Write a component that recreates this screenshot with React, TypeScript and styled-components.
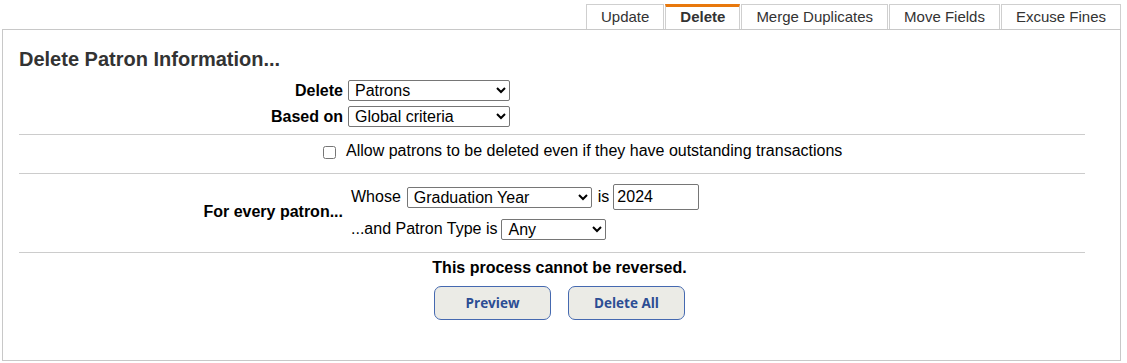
import styled, { createGlobalStyle } from 'styled-components';

const GlobalStyle = createGlobalStyle`
  body {
    margin: 0;
    background: #fff;
    font-family: "Liberation Sans", Arial, sans-serif;
    color: #000;
  }
`;

const TABS = ['Update', 'Delete', 'Merge Duplicates', 'Move Fields', 'Excuse Fines'];

const App = () => {
  return (
    <Page>
      <GlobalStyle />
      <TabBar>
        {TABS.map((t) => (
          <Tab key={t} $active={t === 'Delete'}>
            {t}
          </Tab>
        ))}
      </TabBar>

      <Panel>
        <Heading>Delete Patron Information...</Heading>

        <FieldGrid>
          <Label>Delete</Label>
          <Select $width={162} defaultValue="Patrons">
            <option>Patrons</option>
          </Select>
          <Label>Based on</Label>
          <Select $width={162} defaultValue="Global criteria">
            <option>Global criteria</option>
          </Select>
        </FieldGrid>

        <Divider />

        <CheckRow>
          <Check type="checkbox" />
          <span>Allow patrons to be deleted even if they have outstanding transactions</span>
        </CheckRow>

        <Divider />

        <Criteria>
          <Label>For every patron...</Label>
          <CriteriaRows>
            <Line $height={26}>
              Whose
              <Select $width={185} defaultValue="Graduation Year">
                <option>Graduation Year</option>
              </Select>
              is
              <TextInput defaultValue="2024" />
            </Line>
            <Line $height={22}>
              ...and Patron Type is
              <Select $width={105} defaultValue="Any">
                <option>Any</option>
              </Select>
            </Line>
          </CriteriaRows>
        </Criteria>

        <Divider />

        <Footer>
          <Warning>This process cannot be reversed.</Warning>
          <Buttons>
            <ActionButton>Preview</ActionButton>
            <ActionButton>Delete All</ActionButton>
          </Buttons>
        </Footer>
      </Panel>
    </Page>
  );
};

export default App;

const Page = styled.div`
  width: 1119px;
  padding: 4px 0 0 2px;
`;

const TabBar = styled.div`
  display: flex;
  justify-content: flex-end;
  gap: 1px;
`;

const Tab = styled.div<{ $active?: boolean }>`
  height: 25px;
  box-sizing: border-box;
  display: flex;
  align-items: center;
  padding: ${(p) => (p.$active ? '0 14px 3px' : '0 14px 2px')};
  border: 1px solid #cfcfcf;
  border-bottom: none;
  border-top: ${(p) => (p.$active ? '3px solid #e8780c' : '1px solid #cfcfcf')};
  background: #fff;
  font-size: 15px;
  font-weight: ${(p) => (p.$active ? 700 : 400)};
  color: #333;
  white-space: nowrap;
`;

const Panel = styled.section`
  border: 1px solid #c8c8c8;
  height: 332px;
  box-sizing: border-box;
  padding: 18px 35px 0 16px;
`;

const Heading = styled.h2`
  margin: 0 0 9px;
  font-size: 20px;
  font-weight: 700;
  color: #333;
`;

const FieldGrid = styled.div`
  display: grid;
  grid-template-columns: 324px auto;
  justify-content: start;
  align-items: center;
  column-gap: 5px;
  row-gap: 5px;
  padding-bottom: 7px;
`;

const Label = styled.span`
  font-size: 16px;
  font-weight: 700;
  text-align: right;
`;

const Select = styled.select<{ $width: number }>`
  width: ${(p) => p.$width}px;
  height: 21px;
  font-family: "Liberation Sans", Arial, sans-serif;
  font-size: 16px;
  color: #000;
  background: #fff;
  border: 1px solid #767676;
  border-radius: 2px;
  padding: 0 2px;
`;

const TextInput = styled.input`
  width: 86px;
  height: 26px;
  box-sizing: border-box;
  margin-left: -2px;
  font-family: "Liberation Sans", Arial, sans-serif;
  font-size: 16px;
  border: 1px solid #767676;
  border-radius: 2px;
  padding: 1px 3px;
`;

const Divider = styled.hr`
  border: none;
  border-top: 1px solid #ccc;
  margin: 0;
`;

const CheckRow = styled.label`
  display: flex;
  align-items: center;
  gap: 10px;
  height: 18px;
  padding: 7px 0 13px 304px;
  font-size: 16px;
`;

const Check = styled.input`
  width: 13px;
  height: 13px;
  margin: 2px 0 0;
`;

const Criteria = styled.div`
  display: grid;
  grid-template-columns: 324px auto;
  justify-content: start;
  align-items: center;
  column-gap: 8px;
  padding: 10px 0 12px;
`;

const CriteriaRows = styled.div`
  display: flex;
  flex-direction: column;
  gap: 8px;
`;

const Line = styled.div<{ $height: number }>`
  display: flex;
  align-items: center;
  gap: 6px;
  height: ${(p) => p.$height}px;
  font-size: 16px;

  & > select:last-child {
    margin-left: -2px;
  }
`;

const Footer = styled.div`
  display: flex;
  flex-direction: column;
  align-items: center;
  padding: 6px 0 0 15px;
`;

const Warning = styled.div`
  font-size: 16px;
  font-weight: 700;
`;

const Buttons = styled.div`
  display: flex;
  gap: 17px;
  margin-top: 9px;
`;

const ActionButton = styled.button`
  width: 117px;
  height: 34px;
  border: 1.5px solid #4569b0;
  border-radius: 7px;
  background: #ebebe6;
  color: #2c4d94;
  font-family: "Open Sans", Lato, sans-serif;
  font-size: 13.5px;
  font-weight: 700;
  cursor: pointer;
`;
